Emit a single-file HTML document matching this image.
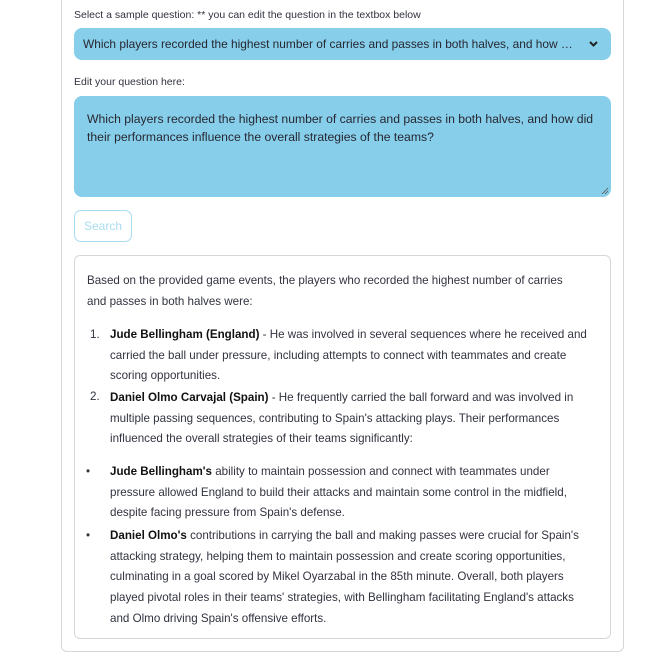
<!DOCTYPE html>
<html><head><style>
body{margin:0;background:#fff;font-family:"Liberation Sans",sans-serif;color:#262730;}
.outer{position:absolute;left:61px;top:-10px;width:561px;height:660px;border:1px solid #d6d6d9;border-radius:6px;}
.abs{position:absolute;white-space:nowrap;}
.lbl{font-size:10.5px;color:#31333f;}
.sel{position:absolute;left:74px;top:28px;width:537px;height:32px;background:#87ceeb;border-radius:8px;}
.ta{position:absolute;left:74px;top:96px;width:537px;height:101px;background:#87ceeb;border-radius:8px;}
.btn{position:absolute;left:74px;top:210px;width:56px;height:30px;border:1px solid #a9dcf0;border-radius:7px;color:#a9dcf0;font-size:12px;text-align:center;line-height:30px;}
.res{position:absolute;left:74px;top:255px;width:535px;height:382px;border:1px solid #d6d6d9;border-radius:6px;}
.t{position:absolute;font-size:11.6px;white-space:nowrap;color:#31333f;}
b{color:#111;}
</style></head><body>
<div class="outer"></div>
<div class="abs lbl" style="left:74px;top:9px">Select a sample question: ** you can edit the question in the textbox below</div>
<div class="sel"></div>
<div class="abs" style="left:83px;top:37px;font-size:11.9px;color:#262730">Which players recorded the highest number of carries and passes in both halves, and how …</div>
<svg class="abs" style="left:588px;top:39px" width="11" height="10" viewBox="0 0 11 10"><path d="M2 3L5.5 6.5L9 3" stroke="#222" stroke-width="2" fill="none"/></svg>
<div class="abs lbl" style="left:74px;top:76px">Edit your question here:</div>
<div class="ta"></div>
<div class="abs" style="left:87px;top:110px;font-size:12.2px;line-height:18px;color:#262730">Which players recorded the highest number of carries and passes in both halves, and how did<br>their performances influence the overall strategies of the teams?</div>
<svg class="abs" style="left:601px;top:187px" width="8" height="8"><path d="M7 1L1 7M7 4L4 7" stroke="#555" stroke-width="0.8"/></svg>
<div class="btn">Search</div>
<div class="res"></div>
<div class="t" style="left:87px;top:271px;line-height:20.7px">Based on the provided game events, the players who recorded the highest number of carries<br>and passes in both halves were:</div>
<div class="t" style="left:90px;top:325px;line-height:20.7px">1.<br><br><br>2.</div>
<div class="t" style="left:110px;top:325px;line-height:20.7px"><b>Jude Bellingham (England)</b> - He was involved in several sequences where he received and<br>carried the ball under pressure, including attempts to connect with teammates and create<br>scoring opportunities.</div>
<div class="t" style="left:110px;top:388px;line-height:20.7px"><b>Daniel Olmo Carvajal (Spain)</b> - He frequently carried the ball forward and was involved in<br>multiple passing sequences, contributing to Spain's attacking plays. Their performances<br>influenced the overall strategies of their teams significantly:</div>
<div class="t" style="left:86px;top:462px;line-height:20.7px">•</div>
<div class="t" style="left:86px;top:526px;line-height:20.7px">•</div>
<div class="t" style="left:110px;top:462px;line-height:20.7px"><b>Jude Bellingham's</b> ability to maintain possession and connect with teammates under<br>pressure allowed England to build their attacks and maintain some control in the midfield,<br>despite facing pressure from Spain's defense.</div>
<div class="t" style="left:110px;top:526px;line-height:20.7px"><b>Daniel Olmo's</b> contributions in carrying the ball and making passes were crucial for Spain's<br>attacking strategy, helping them to maintain possession and create scoring opportunities,<br>culminating in a goal scored by Mikel Oyarzabal in the 85th minute. Overall, both players<br>played pivotal roles in their teams' strategies, with Bellingham facilitating England's attacks<br>and Olmo driving Spain's offensive efforts.</div>
</body></html>
